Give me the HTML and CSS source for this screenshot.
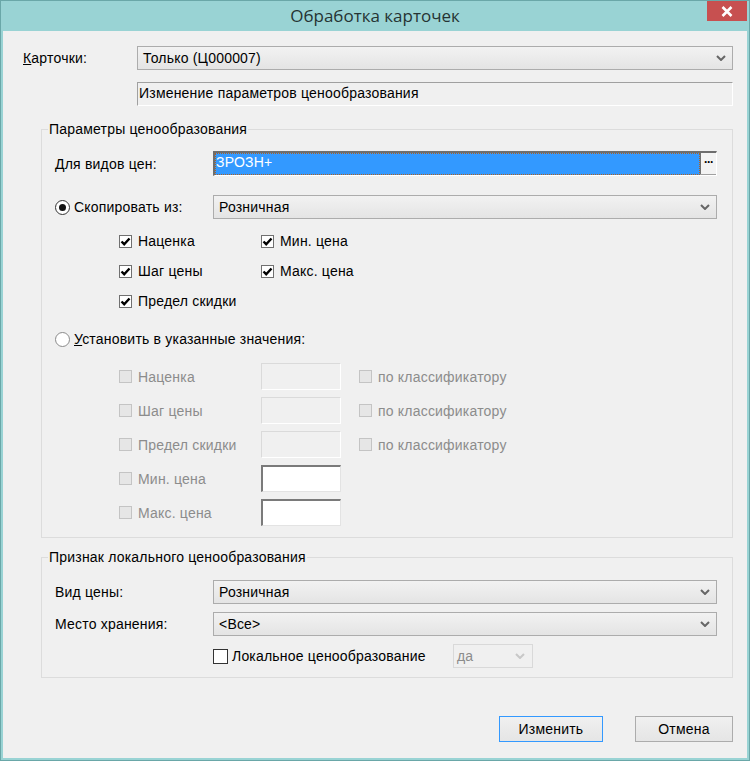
FILE: index.html
```html
<!DOCTYPE html>
<html lang="ru">

<head>
    <meta charset="UTF-8">
    <title>Обработка карточек</title>
    <link rel="stylesheet" href="styles.css">
</head>

<body>
    <div class="window">
        <div class="titlebar">
            <span class="title">Обработка карточек</span>
            <span class="close">
                <svg width="12" height="11" viewBox="0 0 12 11"><path d="M1.5 1 L10.5 10 M10.5 1 L1.5 10" stroke="#fff" stroke-width="2.6" fill="none"/></svg>
            </span>
        </div>

        <div class="client">
            <div class="row row-top">
                <span class="lbl"><u>К</u>арточки:</span>
                <div class="combo combo-wide">
                    <span>Только (Ц000007)</span>
                    <svg class="chev" width="10" height="6" viewBox="0 0 10 6"><path d="M1 1 L5 5 L9 1" stroke="#666" stroke-width="2" fill="none"/></svg>
                </div>
            </div>
            <div class="static-field">Изменение параметров ценообразования</div>

            <fieldset class="group group-params">
                <legend>Параметры ценообразования</legend>

                <div class="row row-field">
                    <span class="lbl">Для видов цен:</span>
                    <div class="picker">
                        <span class="picker-value">ЗРОЗН+</span>
                        <span class="picker-btn">&middot;&middot;&middot;</span>
                    </div>
                </div>

                <div class="row row-copy">
                    <span class="lbl radio-lbl"><span class="radio on"></span>Скопировать из:</span>
                    <div class="combo">
                        <span>Розничная</span>
                        <svg class="chev" width="10" height="6" viewBox="0 0 10 6"><path d="M1 1 L5 5 L9 1" stroke="#666" stroke-width="2" fill="none"/></svg>
                    </div>
                </div>

                <div class="checks">
                    <span class="chk-item"><span class="chk on"></span>Наценка</span>
                    <span class="chk-item"><span class="chk on"></span>Мин. цена</span>
                    <span class="chk-item"><span class="chk on"></span>Шаг цены</span>
                    <span class="chk-item"><span class="chk on"></span>Макс. цена</span>
                    <span class="chk-item"><span class="chk on"></span>Предел скидки</span>
                </div>

                <div class="radio-lbl row-set"><span class="radio"></span><span><u>У</u>становить в указанные значения:</span></div>

                <div class="values">
                    <span class="chk-item off"><span class="chk"></span>Наценка</span>
                    <span class="edit"></span>
                    <span class="chk-item off"><span class="chk"></span>по классификатору</span>

                    <span class="chk-item off"><span class="chk"></span>Шаг цены</span>
                    <span class="edit"></span>
                    <span class="chk-item off"><span class="chk"></span>по классификатору</span>

                    <span class="chk-item off"><span class="chk"></span>Предел скидки</span>
                    <span class="edit"></span>
                    <span class="chk-item off"><span class="chk"></span>по классификатору</span>

                    <span class="chk-item off"><span class="chk"></span>Мин. цена</span>
                    <span class="edit live"></span>
                    <span></span>

                    <span class="chk-item off"><span class="chk"></span>Макс. цена</span>
                    <span class="edit live"></span>
                    <span></span>
                </div>
            </fieldset>

            <fieldset class="group group-local">
                <legend>Признак локального ценообразования</legend>

                <div class="row row-local">
                    <span class="lbl">Вид цены:</span>
                    <div class="combo">
                        <span>Розничная</span>
                        <svg class="chev" width="10" height="6" viewBox="0 0 10 6"><path d="M1 1 L5 5 L9 1" stroke="#666" stroke-width="2" fill="none"/></svg>
                    </div>
                </div>
                <div class="row row-local">
                    <span class="lbl">Место хранения:</span>
                    <div class="combo">
                        <span>&lt;Все&gt;</span>
                        <svg class="chev" width="10" height="6" viewBox="0 0 10 6"><path d="M1 1 L5 5 L9 1" stroke="#666" stroke-width="2" fill="none"/></svg>
                    </div>
                </div>
                <div class="row row-flag">
                    <span></span>
                    <div class="flag">
                        <span class="chk-item big"><span class="chk"></span>Локальное ценообразование</span>
                        <div class="combo combo-off">
                            <span>да</span>
                            <svg class="chev" width="10" height="6" viewBox="0 0 10 6"><path d="M1 1 L5 5 L9 1" stroke="#c8c8c8" stroke-width="2" fill="none"/></svg>
                        </div>
                    </div>
                </div>
            </fieldset>

            <div class="buttons">
                <button class="btn btn-default">Изменить</button>
                <button class="btn">Отмена</button>
            </div>
        </div>
    </div>
</body>
</html>
```

FILE: styles.css
```css
* {
    box-sizing: border-box;
}

body {
    margin: 0;
    background: #99d3d4;
    font-family: "Liberation Sans", Arial, sans-serif;
    font-size: 14px;
    letter-spacing: 0.2px;
    color: #000;
}

.window {
    width: 750px;
    height: 761px;
    border: 1px solid #6aa7a8;
    background: #99d3d4;
    display: flex;
    flex-direction: column;
}

.titlebar {
    height: 30px;
    display: grid;
    grid-template-columns: 1fr auto 1fr;
    align-items: start;
}

.title {
    grid-column: 2;
    font-family: "Open Sans", sans-serif;
    font-size: 17px;
    letter-spacing: 0;
    line-height: 30px;
    color: #253333;
}

.close {
    grid-column: 3;
    justify-self: end;
    width: 40px;
    height: 20px;
    margin-right: 2px;
    background: #c75050;
    display: flex;
    align-items: center;
    justify-content: center;
}

.client {
    flex: 1;
    margin: 0 2px 2px;
    background: #f0f0f0;
    padding: 15px 0 0 20px;
}

/* label + control rows */
.row {
    display: grid;
    align-items: center;
}

.row-top {
    grid-template-columns: 114px 596px;
    height: 24px;
}

.lbl {
    white-space: nowrap;
}

.combo {
    height: 24px;
    border: 1px solid #acacac;
    background: linear-gradient(#f2f2f2, #e4e4e4);
    display: flex;
    align-items: center;
    justify-content: space-between;
    padding: 0 5px 0 5px;
}

.chev {
    margin-right: 1px;
}

.static-field {
    width: 596px;
    height: 24px;
    margin: 12px 0 0 114px;
    border-top: 1px solid #a0a0a0;
    border-left: 1px solid #a0a0a0;
    border-bottom: 1px solid #fff;
    border-right: 1px solid #fff;
    padding: 2px 1px;
}

/* group boxes */
.group {
    margin: 0 0 0 18px;
    width: 692px;
    border: 1px solid #dcdcdc;
    padding: 0 0 0 13px;
}

.group legend {
    padding: 0 1px;
    margin-left: -7px;
    line-height: 16px;
}

.group-params {
    margin-top: 15px;
    height: 417px;
    padding-top: 14px;
}

.row-field,
.row-copy,
.row-local,
.row-flag {
    grid-template-columns: 158px 504px;
}

.picker {
    height: 25px;
    display: flex;
    border-top: 2px solid #6e6e6e;
    border-left: 2px solid #6e6e6e;
    border-right: 1px solid #fff;
    border-bottom: 1px solid #fff;
    box-shadow: inset -1px -1px 0 #a0a0a0;
}

.picker-value {
    flex: 1;
    background: #3399ff;
    color: #fff;
    outline: 1px dotted #b06020;
    outline-offset: -1px;
    padding: 1px 1px;
}

.picker-btn {
    width: 16px;
    margin-bottom: 1px;
    background: #f3f3f3;
    border-left: 1px solid #707070;
    font-weight: bold;
    font-size: 12px;
    line-height: 18px;
    text-align: center;
    letter-spacing: -1px;
}

.row-copy {
    margin-top: 19px;
    height: 24px;
}

.radio-lbl {
    display: flex;
    align-items: center;
    gap: 4px;
}

.radio {
    width: 15px;
    height: 15px;
    border-radius: 50%;
    border: 1px solid #8a8a8a;
    background: #fff;
    display: flex;
    align-items: center;
    justify-content: center;
}

.radio.on {
    border-color: #333;
}

.radio.on::after {
    content: "";
    width: 7px;
    height: 7px;
    border-radius: 50%;
    background: #111;
}

/* checkbox lists */
.checks {
    margin: 7px 0 0 64px;
    display: grid;
    grid-template-columns: 142px 200px;
    grid-auto-rows: 30px;
    align-items: center;
}

.chk-item {
    display: flex;
    align-items: center;
    gap: 6px;
    white-space: nowrap;
}

.chk {
    width: 13px;
    height: 13px;
    border: 1px solid #707070;
    background: #fff;
    flex: none;
}

.chk.on {
    background: #fff url("data:image/svg+xml;utf8,<svg xmlns='http://www.w3.org/2000/svg' width='11' height='11' viewBox='0 0 11 11'><path d='M1.5 5.5 L4.2 8.2 L9.5 2.5' stroke='%23000' stroke-width='2.4' fill='none'/></svg>") center no-repeat;
}

.chk-item.off {
    color: #8c8c8c;
}

.chk-item.off .chk {
    border-color: #c4c4c4;
    background: #e6e6e6;
}

.row-set {
    margin-top: 13px;
    height: 20px;
}

.values {
    margin: 14px 0 0 64px;
    display: grid;
    grid-template-columns: 142px 98px 200px;
    grid-auto-rows: 27px;
    row-gap: 7px;
    align-items: center;
}

.edit {
    width: 80px;
    height: 27px;
    border: 1px solid #dadada;
    border-right-color: #fff;
    border-bottom-color: #fff;
    background: #f0f0f0;
}

.edit.live {
    background: #fff;
    border-top: 2px solid #7a7a7a;
    border-left: 2px solid #7a7a7a;
    border-right: 1px solid #e3e3e3;
    border-bottom: 1px solid #e3e3e3;
}

.group-local {
    margin-top: 11px;
    height: 129px;
    padding-top: 15px;
}

.row-local {
    height: 24px;
    margin-bottom: 8px;
}

.row-flag {
    height: 24px;
}

.flag {
    display: flex;
    align-items: center;
}

.chk-item.big {
    width: 240px;
    gap: 4px;
}

.chk-item.big .chk {
    width: 15px;
    height: 15px;
    border-color: #333;
}

.combo-off {
    width: 80px;
    background: #f0f0f0;
    border-color: #d9d9d9;
    color: #8c8c8c;
    padding-left: 3px;
    padding-right: 6px;
}

/* dialog buttons */
.buttons {
    width: 710px;
    margin-top: 38px;
    display: flex;
    justify-content: flex-end;
    gap: 32px;
}

.btn {
    height: 26px;
    width: 98px;
    border: 1px solid #acacac;
    background: linear-gradient(#f0f0f0, #e5e5e5);
    font-family: inherit;
    font-size: 14px;
    letter-spacing: 0.2px;
    padding: 0;
}

.btn-default {
    width: 104px;
    border-color: #3399ff;
}
```
